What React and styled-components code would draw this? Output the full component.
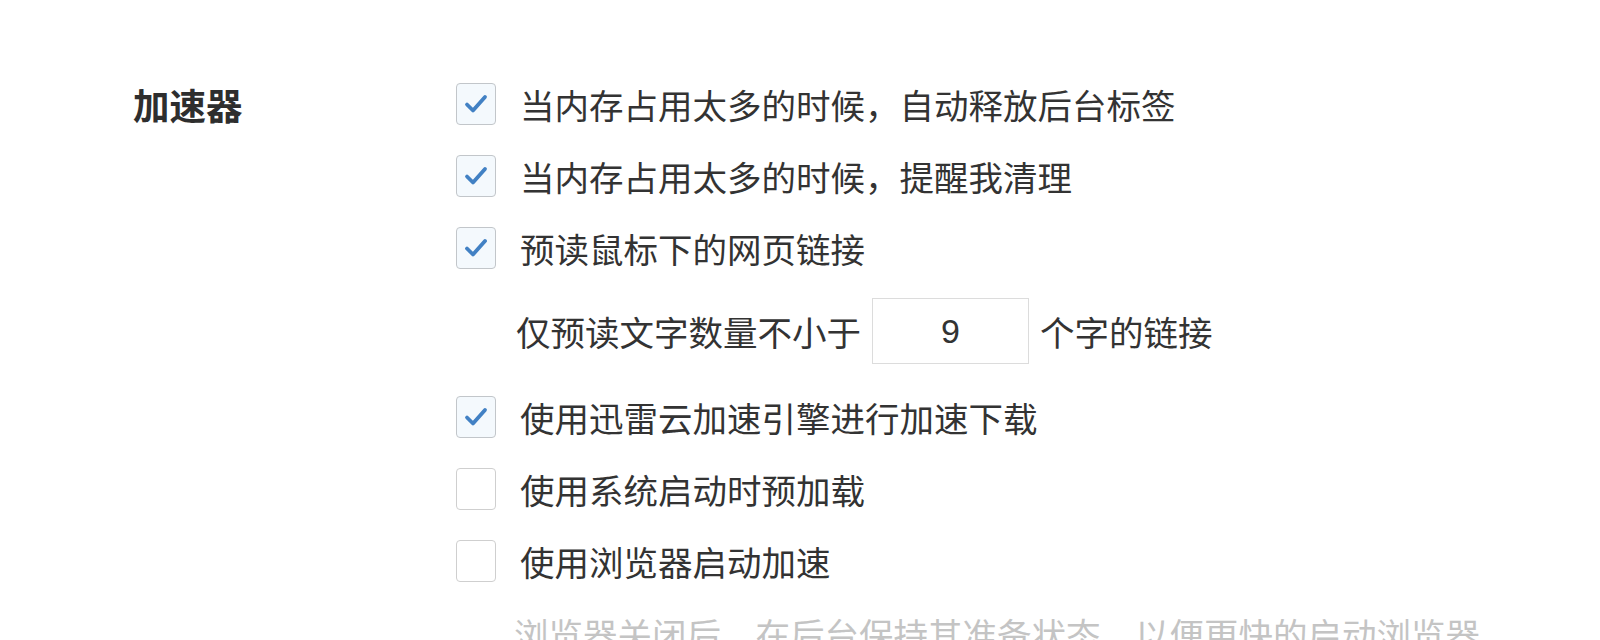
import React from "react";
import styled, { createGlobalStyle } from "styled-components";

const GlobalStyle = createGlobalStyle`
  html, body {
    margin: 0;
    padding: 0;
    background: #ffffff;
    font-family: "Noto Sans CJK SC", "Noto Sans", "Liberation Sans", sans-serif;
  }
`;

const Page = styled.div`
  display: flex;
  align-items: flex-start;
  width: 1600px;
  height: 640px;
  overflow: hidden;
  padding: 68px 0 0 133px;
  box-sizing: border-box;
  background: #ffffff;
`;

const SectionLabel = styled.div`
  width: 323px;
  flex-shrink: 0;
  height: 72px;
  display: flex;
  align-items: center;
  font-size: 36.5px;
  font-weight: 700;
  color: #2e2e2e;
`;

const Options = styled.div`
  display: flex;
  flex-direction: column;
  flex-shrink: 0;
`;

const OptionRow = styled.label`
  height: 72px;
  flex-shrink: 0;
  display: flex;
  align-items: center;
  gap: 24px;
  font-size: 34.5px;
  color: #333333;
  white-space: nowrap;
`;

const Box = styled.span`
  width: 38px;
  height: 40px;
  flex-shrink: 0;
  border: 1.5px solid ${(p) => (p.checked ? "#c2c6ca" : "#cfcfcf")};
  border-radius: 4px;
  background: ${(p) => (p.checked ? "#f4f9fd" : "#ffffff")};
  display: flex;
  align-items: center;
  justify-content: center;
`;

const SubRow = styled.div`
  display: flex;
  flex-shrink: 0;
  align-items: center;
  gap: 11px;
  margin: 14px 0 17px 60px;
  font-size: 34.5px;
  color: #333333;
  white-space: nowrap;
`;

const NumberBox = styled.div`
  width: 155px;
  height: 64px;
  border: 1.5px solid #dcdcdc;
  display: flex;
  align-items: center;
  justify-content: center;
  font-family: "Liberation Sans", "Noto Sans", sans-serif;
  font-size: 34px;
  color: #333333;
`;

const Hint = styled.div`
  height: 72px;
  flex-shrink: 0;
  display: flex;
  align-items: center;
  padding-left: 58px;
  font-size: 34.5px;
  color: #c4c4c4;
  white-space: nowrap;
`;

function Check() {
  return (
    <svg width="26" height="22" viewBox="0 0 26 22">
      <path
        d="M4 11.5 L10 17.5 L22 4"
        fill="none"
        stroke="#4281c4"
        strokeWidth="3.8"
        strokeLinecap="round"
        strokeLinejoin="round"
      />
    </svg>
  );
}

function Option({ checked, children }) {
  return (
    <OptionRow>
      <Box checked={checked}>{checked && <Check />}</Box>
      <span>{children}</span>
    </OptionRow>
  );
}

export default function App() {
  return (
    <>
      <GlobalStyle />
      <Page>
        <SectionLabel>加速器</SectionLabel>
        <Options>
          <Option checked>当内存占用太多的时候，自动释放后台标签</Option>
          <Option checked>当内存占用太多的时候，提醒我清理</Option>
          <Option checked>预读鼠标下的网页链接</Option>
          <SubRow>
            <span>仅预读文字数量不小于</span>
            <NumberBox>9</NumberBox>
            <span>个字的链接</span>
          </SubRow>
          <Option checked>使用迅雷云加速引擎进行加速下载</Option>
          <Option>使用系统启动时预加载</Option>
          <Option>使用浏览器启动加速</Option>
          <Hint>浏览器关闭后，在后台保持其准备状态，以便更快的启动浏览器</Hint>
        </Options>
      </Page>
    </>
  );
}
